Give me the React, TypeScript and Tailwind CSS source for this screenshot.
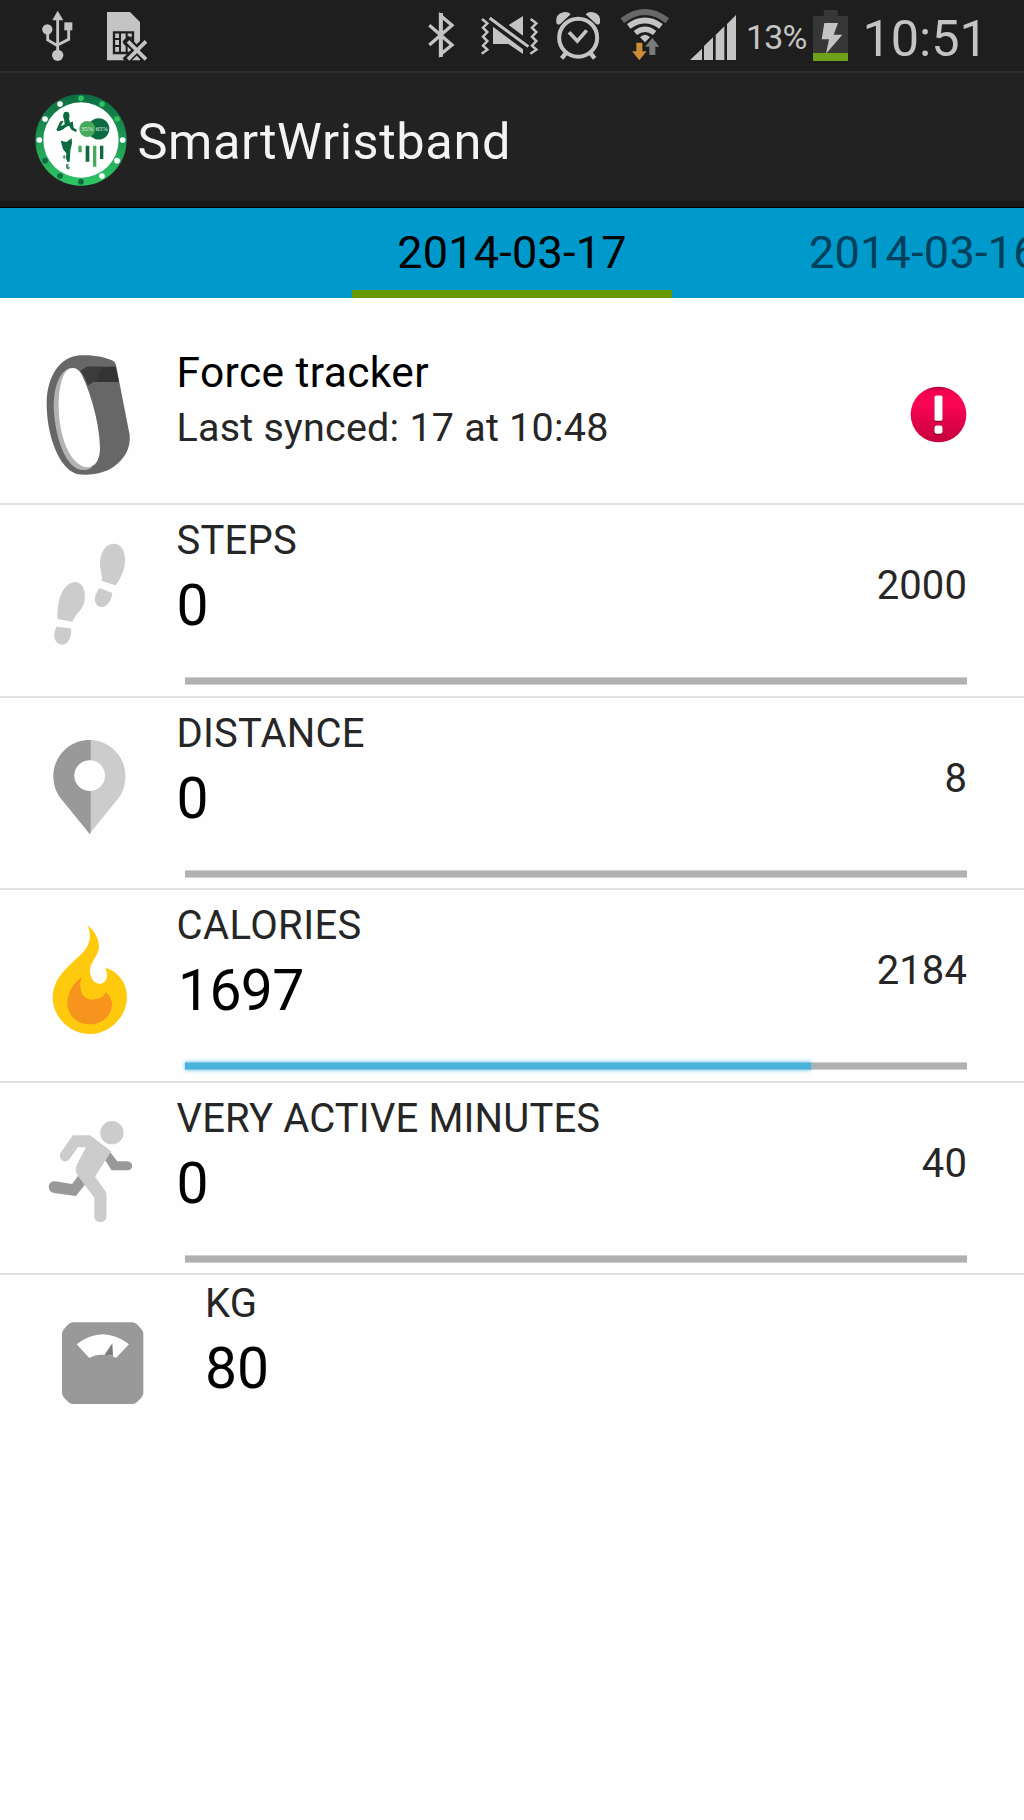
import type { ReactNode } from "react";

const GLYPH = "#c4c4c4";
const BAR = "#1e1e1e";

function StatusBar() {
  return (
    <div className="flex h-[71px] items-start overflow-hidden bg-[#1e1e1e] text-[#c4c4c4]">
      {/* USB */}
      <svg className="mt-2 ml-10 h-[54px] w-[35px] shrink-0" viewBox="120 24 105 162" fill={GLYPH}>
        <path d="M157 61L173 32L190 61Z" />
        <path d="M143 92V120L173 137M206 88V118L173 135M173 55V160" fill="none" stroke={GLYPH} strokeWidth="8.5" />
        <circle cx="142" cy="88" r="15.5" />
        <rect x="193" y="67" width="24" height="24" />
        <circle cx="173" cy="166" r="17" />
      </svg>
      {/* SIM missing */}
      <svg className="mt-2 ml-[30px] h-[54px] w-[43px] shrink-0" viewBox="315 24 129 162">
        <path d="M321 36H390L420 66V181H321Z" fill={GLYPH} />
        <path d="M342 97H399V159H342Z" fill="none" stroke={BAR} strokeWidth="7" />
        <path d="M360 97V159M380 97V118L372 128L380 138V159M342 117H360M342 138H360M380 113H400" fill="none" stroke={BAR} strokeWidth="6" />
        <path d="M376 116L444 184M444 116L376 184" stroke={BAR} strokeWidth="24" />
        <path d="M384 124L438 178M438 124L384 178" stroke={GLYPH} strokeWidth="11" />
      </svg>
      {/* Bluetooth */}
      <svg className="mt-2 ml-[279px] h-[54px] w-[29px] shrink-0" viewBox="81 24 87 162" fill="none" stroke={GLYPH}>
        <path d="M88 76L156 135L122 163V47L156 76L88 135" strokeWidth="10" />
        <path d="M122.500 39V171" strokeWidth="12" />
      </svg>
      {/* Vibrate / muted */}
      <svg className="mt-2 ml-6 h-[54px] w-[60px] shrink-0" viewBox="240 24 180 162" fill={GLYPH}>
        <path d="M246 57L262 70L249 83L262 96L249 110L262 123L249 137L262 149L245 161M392 57L409 70L396 83L409 96L396 110L409 123L396 137L409 149L391 161" fill="none" stroke={GLYPH} strokeWidth="7.500" />
        <path d="M279 80L369 148V162L325 132H279Z" />
        <path d="M326 75L369 48V107Z" />
        <path d="M269 54L385 140" stroke={GLYPH} strokeWidth="9" />
      </svg>
      {/* Alarm */}
      <svg className="mt-2 ml-3.5 h-[54px] w-12 shrink-0" viewBox="462 24 144 162" fill={GLYPH}>
        <path d="M497 160L485 175M572 160L584 175" stroke={GLYPH} strokeWidth="13" />
        <circle cx="534.500" cy="113" r="57" fill="none" stroke={GLYPH} strokeWidth="12" />
        <path d="M507 97L532 123L560 91" fill="none" stroke={GLYPH} strokeWidth="11" />
        <path d="M469 68Q466 42 490 37Q504 34 512 43L480 73Q471 76 469 68Z" />
        <path d="M600 68Q603 42 579 37Q565 34 557 43L589 73Q598 76 600 68Z" />
      </svg>
      {/* Wi-Fi */}
      <svg className="mt-2 ml-[17px] h-[54px] w-[52px] shrink-0" viewBox="657 24 156 162">
        <path d="M667 62Q735 10 802 62" fill="none" stroke="#686868" strokeWidth="18" />
        <path d="M686 79Q735 44 783 79" fill="none" stroke={GLYPH} strokeWidth="18" />
        <path d="M706 99Q735 76 764 99" fill="none" stroke={GLYPH} strokeWidth="16" />
        <path d="M720 112Q735 97 750 112L735 127Z" fill={GLYPH} />
        <path d="M757 114L778 140H766V165H748V140H735Z" fill="#7b7b7b" stroke={BAR} strokeWidth="4" paintOrder="stroke" />
        <path d="M709 128H727V154H740L718 181L696 154H709Z" fill="#cb8c36" stroke={BAR} strokeWidth="4" paintOrder="stroke" />
      </svg>
      {/* Signal */}
      <svg className="mt-2 ml-[19px] h-[54px] w-[47px] shrink-0" viewBox="30 24 141 162" fill={GLYPH}>
        <path d="M30 180L66 146V180ZM72 180V138L99 112V180ZM107 180V105L133 79V180ZM141 180V72L168 45V180Z" />
      </svg>
      <span className="mt-[17px] ml-[9px] w-[67px] shrink-0 text-[34px] leading-10 tracking-[-0.800px] whitespace-nowrap">13%</span>
      {/* Battery */}
      <svg className="mt-2 h-[54px] w-9 shrink-0" viewBox="399 24 108 162">
        <path d="M431 30H473V48H504V159H399V48H431Z" fill="#373737" />
        <path d="M399 159H504V183H399Z" fill="#6fa019" />
        <path d="M433 69H474L461 104H487L438 161L447 118H425Z" fill={GLYPH} />
      </svg>
      <span className="mt-[11px] ml-[13.500px] text-[50.500px] leading-[56px] tracking-[-0.1px] whitespace-nowrap">10:51</span>
    </div>
  );
}

const dots: [number, number, string][] = [
  [242, 293, "#2fc160"],
  [305, 310, "#2fc160"],
  [350, 355, "#2fc160"],
  [367, 418, "#ffffff"],
  [350, 480, "#ffffff"],
  [305, 526, "#ffffff"],
  [242, 543, "#0d6b42"],
  [179, 526, "#0d6b42"],
  [134, 480, "#0d6b42"],
  [117, 418, "#ffffff"],
  [134, 355, "#ffffff"],
  [179, 310, "#ffffff"],
];

function AppLogo() {
  return (
    <svg className="mt-[20.500px] ml-[35px] size-[92px] shrink-0" viewBox="104 280 276 276">
      <defs>
        <linearGradient id="ring" x1="0" y1="0" x2="0" y2="1">
          <stop offset="0" stopColor="#0d6b42" />
          <stop offset="1" stopColor="#2fc865" />
        </linearGradient>
      </defs>
      <circle cx="242" cy="418" r="137" fill="url(#ring)" />
      <circle cx="242" cy="418" r="113" fill="#ffffff" />
      {dots.map(([x, y, c]) => (
        <circle key={`${x}-${y}`} cx={x} cy={y} r="8.500" fill={c} />
      ))}
      <g fill="#0d6b42">
        <ellipse cx="198" cy="346" rx="9.500" ry="13" />
        <path d="M191 354H206L209 366L217 362L220 381L230 388L227 394L214 388L206 375L197 379L186 388L172 392L168 387L180 362L190 360L181 377L193 371Z" />
        <path d="M181 420L198 424L214 413L215 428L210 450L208 483L202 484L197 474L198 458L188 446Z" />
        <path d="M190 463L196 466L193 475L188 472ZM197 491L206 489L203 496L209 501L205 507L197 503Z" opacity=".75" />
        <circle cx="295" cy="384.500" r="32" />
        <path d="M256 435H267V483H256ZM299 435H309V475H299Z" />
      </g>
      <g fill="#45ab5a">
        <circle cx="261" cy="385" r="24" />
        <path d="M234 435H244V455H234ZM278 435H288V498H278Z" />
      </g>
      <g className="font-['Liberation_Serif']" fill="#e6f4ea" fontSize="18" textAnchor="middle">
        <text x="260" y="391" textLength="36" lengthAdjust="spacingAndGlyphs">35%</text>
        <text x="304" y="391" textLength="36" lengthAdjust="spacingAndGlyphs">65%</text>
      </g>
    </svg>
  );
}

function BandIcon() {
  return (
    <svg className="h-[205px] w-[177px] shrink-0" viewBox="-90 -126 531 615">
      <path d="M150 46C190 44 228 51 250 63Q256 67 258 75L299 285C302 325 285 350 264 370C232 402 175 409 140 402C88 386 50 290 50 190C51 105 92 50 150 46Z" fill="#676767" />
      <path d="M128 84C90 84 71 140 71 200C75 300 110 390 160 390C172 390 182 387 186 380Z" fill="#b3b3b3" />
      <path d="M128 84C150 84 158 108 170 138C190 190 210 265 210 330C208 362 194 382 172 382C120 376 87 290 86 200C86 135 100 84 128 84Z" fill="#fefefe" />
      <path d="M152 92L172 80H257L267 126H189L174 136C168 118 162 105 152 92Z" fill="#333434" />
      <path d="M152 92L172 80H216Q208 96 202 126H189L174 136C168 118 162 105 152 92Z" fill="#3d3a3b" />
    </svg>
  );
}

function StepsIcon() {
  return (
    <svg className="h-[191px] w-[177px] shrink-0" viewBox="-90 -45 531 573" fill="#cccccc">
      <path d="M250 71C272 70 286 92 285 122C285 150 270 178 257 196L215 183C218 165 210 150 210 130C211 95 228 72 250 71Z" />
      <path d="M208 204L247 219C245 240 232 262 213 261C196 259 190 238 198 222Q203 212 208 204Z" />
      <path d="M135 186C158 188 167 210 164 240C160 270 137 280 127 305L83 297C80 262 90 190 135 186Z" />
      <path d="M79 320L123 325C126 350 115 374 97 374C76 373 68 350 75 333Z" />
    </svg>
  );
}

function PinIcon() {
  return (
    <svg className="h-[190px] w-[177px] shrink-0" viewBox="-90 -36 531 570">
      <path d="M178 90C238 90 286 138 286 198C286 225 279 247 265 265L179 371Z" fill="#cccccc" />
      <path d="M182 90C119 88 70 139 70 198C70 225 78 247 92 265L179 372L182 368Z" fill="#999999" />
      <circle cx="179" cy="197" r="46" fill="#fefefe" />
    </svg>
  );
}

function FlameIcon() {
  return (
    <svg className="h-[191px] w-[177px] shrink-0" viewBox="-90 -30 531 573">
      <path d="M173 75C200 100 210 125 206 148C200 175 178 190 180 215C182 240 196 252 211 251C229 249 237 230 226 203C266 215 291 250 291 290C291 350 240 402 180 402C118 402 68 350 68 292C69 245 97 215 137 178C168 150 192 125 173 75Z" fill="#ffc90e" />
      <path d="M155 231C145 260 152 298 186 299C208 298 222 290 227 276C240 288 246 300 246 313C246 348 215 373 180 373C142 373 112 347 112 308C113 275 130 250 155 231Z" fill="#f7941e" />
    </svg>
  );
}

function RunnerIcon() {
  return (
    <svg className="h-[190px] w-[177px] shrink-0" viewBox="-90 -21 531 570">
      <g transform="scale(1.148 1)">
        <path d="M210 187L228 214H256Q267 217 267 228Q266 240 255 241H213L196 210Z" fill="#999999" />
        <path d="M126 257L145 282L120 318L62 309Q48 304 49 288Q52 273 66 274L110 282Z" fill="#999999" />
        <ellipse cx="214" cy="128" rx="30.500" ry="35" fill="#cccccc" />
        <path d="M112 136H157L212 184L170 260L197 303Q200 310 200 320V380Q198 396 184 396Q169 395 168 380V323L127 260Q116 245 121 228L146 172H125L103 208Q95 218 85 212Q75 203 79 190Z" fill="#cccccc" />
      </g>
    </svg>
  );
}

function ScaleIcon() {
  return (
    <svg className="h-[191px] w-[205px] shrink-0" viewBox="-90 15 615 573">
      <path d="M128 157H308Q315 158 321 163L334 177Q340 184 340 190V370Q340 376 334 383L321 396Q315 402 308 402H128Q121 402 115 396L102 383Q96 376 96 370V190Q96 184 102 177L115 163Q121 158 128 157Z" fill="#999999" />
      <path d="M140 223Q218 163 297 223L258 264Q248 254 218 254Q192 254 178 264Z" fill="#fefefe" />
      <path d="M223 256L247 220L249 258Q238 253 223 256Z" fill="#7a7a7a" />
    </svg>
  );
}

function AlertIcon() {
  return (
    <svg className="mt-[88px] mr-[57px] size-[57px] shrink-0" viewBox="450 48 172 172">
      <defs>
        <linearGradient id="alert" x1="0" y1="0" x2="0" y2="1">
          <stop offset="0" stopColor="#a8003a" />
          <stop offset=".08" stopColor="#f5004f" />
          <stop offset=".3" stopColor="#fb0556" />
          <stop offset="1" stopColor="#c4003c" />
        </linearGradient>
      </defs>
      <circle cx="536" cy="134" r="84" fill="url(#alert)" />
      <path d="M524 82H548V156H524ZM524 171H548V196H524Z" fill="#8f0030" />
      <rect x="524" y="77" width="24" height="76" rx="5" fill="#ffffff" />
      <rect x="524" y="167" width="24" height="25" rx="7" fill="#ffffff" />
    </svg>
  );
}

type Metric = { label: string; value: string; goal: string; progress: number; icon: ReactNode; size: string; tracking: string };

const metrics: Metric[] = [
  { label: "STEPS", value: "0", goal: "2000", progress: 0, icon: <StepsIcon />, size: "h-[193px]", tracking: "tracking-[0.2px]" },
  { label: "DISTANCE", value: "0", goal: "8", progress: 0, icon: <PinIcon />, size: "h-[192px]", tracking: "tracking-[0.2px]" },
  { label: "CALORIES", value: "1697", goal: "2184", progress: 80, icon: <FlameIcon />, size: "h-[193px]", tracking: "tracking-[0.42px]" },
  { label: "VERY ACTIVE MINUTES", value: "0", goal: "40", progress: 0, icon: <RunnerIcon />, size: "h-[192px]", tracking: "tracking-[0.16px]" },
];

function MetricRow({ label, value, goal, progress, icon, size, tracking }: Metric) {
  return (
    <div className={`flex items-start overflow-hidden border-b-2 border-[#e3e3e3] ${size}`}>
      {icon}
      <div className="mr-[57px] flex-1 pt-3">
        <div className="flex h-[122px] justify-between">
          <div className="-ml-[0.500px]">
            <p className={`text-[40px] leading-[48px] whitespace-nowrap text-[#262626] ${tracking}`}>{label}</p>
            <p className={`mt-[7px] text-[57px] leading-[68px] text-black ${value.length > 1 ? "pl-[1.500px] tracking-[-0.6px]" : ""}`}>{value}</p>
          </div>
          <p className="mt-[45px] text-[40px] leading-[48px] tracking-[0.1px] text-[#262626]">{goal}</p>
        </div>
        <div className="mt-[38px] ml-2 h-2 border-y border-[#d0d0d0] bg-[#b1b1b1]">
          {progress > 0 && (
            <div
              className="-mt-px h-2 border-y border-[#7fc4e0] bg-[#4ab3dc] shadow-[0_0_4px_#6cc3e4]"
              style={{ width: `${progress}%` }}
            />
          )}
        </div>
      </div>
    </div>
  );
}

export default function App() {
  return (
    <div className="h-[1820px] w-[1024px] overflow-hidden bg-[#fefefe] font-[Roboto,sans-serif]">
      <StatusBar />
      <header className="flex h-[137px] items-start border-t-2 border-b border-t-[#2d2d2d] border-b-black bg-linear-to-b from-[#222222] from-94% to-[#191919] to-96%">
        <AppLogo />
        <h1 className="mt-[37px] ml-[10.500px] text-[50.500px] leading-[64px] tracking-[0.6px] whitespace-nowrap text-[#f3f3f3]">SmartWristband</h1>
      </header>
      <nav className="flex h-[90px] overflow-hidden bg-[#0099cc] text-[45px] leading-[56px] tracking-[0.25px] whitespace-nowrap">
        <div className="ml-[352px] flex w-80 shrink-0 flex-col items-center justify-between pt-[17px]">
          <span className="text-black">2014-03-17</span>
          <div className="h-2 w-full bg-[#669900]" />
        </div>
        <span className="ml-[137px] pt-[17px] text-[#00405a]">2014-03-16</span>
      </nav>
      <section className="flex h-[207px] items-start border-b-2 border-[#e3e3e3]">
        <BandIcon />
        <div className="-ml-[0.500px] flex-1 pt-[50px] whitespace-nowrap">
          <p className="text-[42.500px] leading-[50px] tracking-[0.38px] text-black">Force tracker</p>
          <p className="mt-[6px] text-[39.500px] leading-[48px] tracking-[0.22px] text-[#262626]">Last synced: 17 at 10:48</p>
        </div>
        <AlertIcon />
      </section>
      {metrics.map((m) => (
        <MetricRow key={m.label} {...m} />
      ))}
      <section className="flex items-start">
        <ScaleIcon />
        <div className="pt-[5px]">
          <p className="text-[40px] leading-[48px] tracking-[0.3px] text-[#262626]">KG</p>
          <p className="mt-[7px] text-[57px] leading-[68px] text-black">80</p>
        </div>
      </section>
    </div>
  );
}
